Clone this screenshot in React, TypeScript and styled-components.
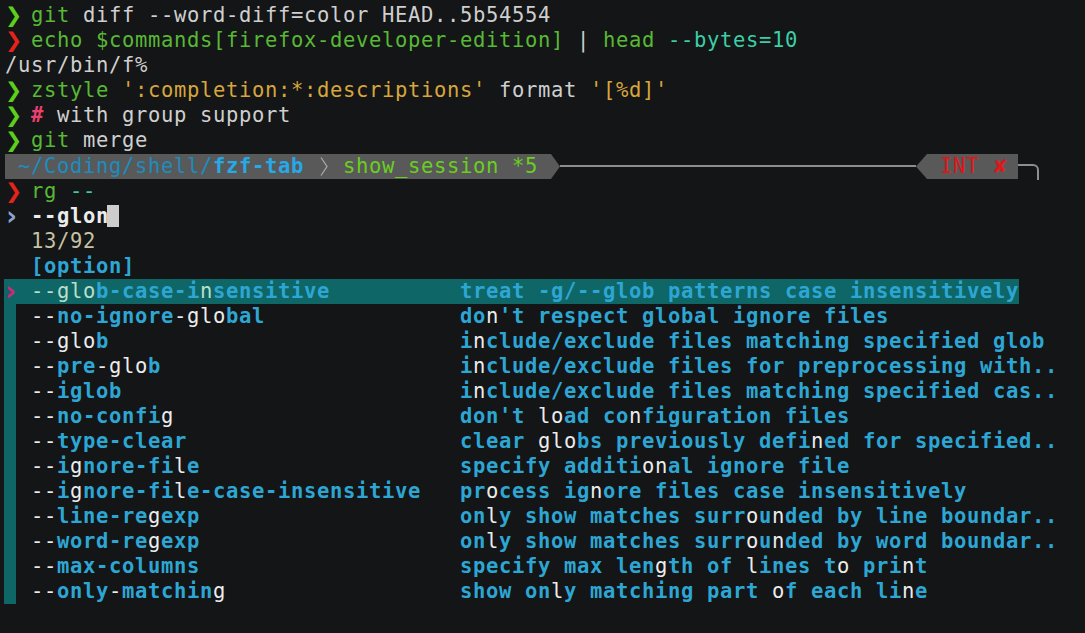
import styled, { createGlobalStyle } from "styled-components";

const palette = {
  fg: "#cfcfcf",
  green: "#58b934",
  okPrompt: "#5ccf1c",
  errPrompt: "#e3231c",
  teal: "#3ccfa6",
  yellow: "#d8a63c",
  pink: "#e9416f",
  blue: "#2ea6d4",
  white: "#ececec",
  khaki: "#c8c2a2",
  pointer: "#8ba6d4",
};

type Tone = keyof typeof palette;
type Seg = [string, Tone, boolean?];

const GlobalStyle = createGlobalStyle`
  body {
    margin: 0;
    background: #131517;
    overflow: hidden;
  }
`;

const Screen = styled.main`
  box-sizing: border-box;
  width: 1085px;
  height: 633px;
  padding: 3px 0 0 5px;
  font-family: "DejaVu Sans Mono", "Liberation Mono", monospace;
  font-size: 20.5px;
  letter-spacing: calc(13px - 1ch);
  color: ${palette.fg};
`;

const Line = styled.div`
  height: 25px;
  line-height: 25px;
  white-space: pre;
`;

const Txt = styled.span<{ $c: Tone; $b?: boolean }>`
  color: ${(p) => palette[p.$c]};
  font-weight: ${(p) => (p.$b ? 700 : 400)};
`;

const Glyph = styled.span<{ $c: string; $size?: number }>`
  display: inline-block;
  width: 13px;
  text-align: center;
  letter-spacing: 0;
  font-family: "DejaVu Sans", sans-serif;
  font-weight: 700;
  font-size: ${(p) => p.$size ?? 20.5}px;
  line-height: 25px;
  vertical-align: top;
  color: ${(p) => p.$c};
`;

const Cursor = styled.span`
  display: inline-block;
  width: 12px;
  height: 22px;
  margin-left: -2px;
  vertical-align: -4px;
  background: #cdcdcd;
`;

/* status line */
const StatusRow = styled.div`
  display: flex;
  align-items: center;
  height: 25px;
  padding-right: 46px;
  margin-top: 1px;
`;

const PathSegment = styled.div`
  height: 25px;
  line-height: 25px;
  padding-right: 9px;
  background: #595959;
  white-space: pre;
  clip-path: polygon(0 0, calc(100% - 9px) 0, 100% 50%, calc(100% - 9px) 100%, 0 100%);
`;

const Dir = styled.span<{ $b?: boolean }>`
  color: ${(p) => (p.$b ? "#26a9e8" : "#1d8cbf")};
  font-weight: ${(p) => (p.$b ? 700 : 400)};
`;

const Branch = styled.span`
  color: #6acf1f;
`;

const Fill = styled.div`
  flex: 1;
  height: 2px;
  margin-top: -2px;
  background: #8e8e8e;
`;

const StatusSegment = styled.div`
  height: 25px;
  line-height: 25px;
  padding-left: 11px;
  background: #595959;
  white-space: pre;
  color: #e0161a;
  clip-path: polygon(11px 0, 100% 0, 100% 100%, 11px 100%, 0 50%);
`;

const Corner = styled.div`
  align-self: flex-start;
  width: 19px;
  height: 14px;
  margin-top: 10px;
  border-top: 2px solid #8e8e8e;
  border-right: 2px solid #8e8e8e;
  border-top-right-radius: 6px;
`;

/* completion list */
const Item = styled.div<{ $selected?: boolean }>`
  display: flex;
  width: fit-content;
  height: 25px;
  line-height: 25px;
  margin-left: -1px;
  white-space: pre;
  background: ${(p) => (p.$selected ? "#0e6666" : "transparent")};
`;

const Gutter = styled.div`
  flex: none;
  width: 27px;
  display: flex;
`;

const Stripe = styled.div`
  width: 12px;
  height: 100%;
  background: #0e6666;
`;

const OptionCell = styled.div`
  flex: none;
  width: 429px;
`;

const Part = styled.span<{ $hl: boolean; $selected?: boolean }>`
  color: ${(p) => (p.$hl ? (p.$selected ? "#b9dfc9" : palette.white) : palette.blue)};
  font-weight: ${(p) => (p.$hl ? 400 : 700)};
`;

const history: { mark: string; segs: Seg[] }[] = [
  { mark: palette.okPrompt, segs: [["git", "green"], [" diff --word-diff=color HEAD..5b54554", "fg"]] },
  {
    mark: palette.errPrompt,
    segs: [
      ["echo", "green"],
      [" $commands[firefox-developer-edition]", "green"],
      [" | ", "fg"],
      ["head", "green"],
      [" --bytes=10", "teal"],
    ],
  },
  { mark: "", segs: [["/usr/bin/f%", "fg"]] },
  {
    mark: palette.okPrompt,
    segs: [
      ["zstyle", "green"],
      [" ':completion:*:descriptions'", "yellow"],
      [" format ", "fg"],
      ["'[%d]'", "yellow"],
    ],
  },
  { mark: palette.okPrompt, segs: [["#", "pink", true], [" with group support", "fg"]] },
  { mark: palette.okPrompt, segs: [["git", "green"], [" merge", "fg"]] },
];

const options: [string, string][] = [
  ["{--glo}b-case-i{n}sensitive", "treat -g/--glob patterns case insensitively"],
  ["{--}no-ignore{-glo}bal", "do{n}'t respect global ignore files"],
  ["{--glo}b", "i{n}clude/exclude files matching specified glob"],
  ["{--}pre{-glo}b", "i{n}clude/exclude files for preprocessing with.."],
  ["{--}iglob", "i{n}clude/exclude files matching specified cas.."],
  ["{--}no-confi{g}", "don't {lo}ad co{n}figuration files"],
  ["{--}type-clear", "clear {glo}bs previously defi{n}ed for specified.."],
  ["{--}i{g}nore-fi{l}e", "specify additi{on}al ignore file"],
  ["{--}i{g}nore-fi{l}e-case-insensitive", "pr{o}cess ig{n}ore files case insensitively"],
  ["{--}line-re{g}exp", "on{l}y show matches surr{o}u{n}ded by line boundar.."],
  ["{--}word-re{g}exp", "on{l}y show matches surr{o}u{n}ded by word boundar.."],
  ["{--}max-columns", "specify max len{g}th of {l}ines t{o} pri{n}t"],
  ["{--}only{-}matchin{g}", "show on{l}y matching part {o}f each li{n}e"],
];

const parse = (s: string) =>
  s
    .split(/(\{[^}]*\})/)
    .filter(Boolean)
    .map((p) => (p.startsWith("{") ? { t: p.slice(1, -1), hl: true } : { t: p, hl: false }));

const Marked = ({ text, selected }: { text: string; selected?: boolean }) => (
  <>
    {parse(text).map((p, i) => (
      <Part key={i} $hl={p.hl} $selected={selected}>
        {p.t}
      </Part>
    ))}
  </>
);

const Chevron = () => (
  <svg width="13" height="25" viewBox="0 0 13 25" style={{ verticalAlign: "top" }}>
    <path d="M4 3.5 L10 12.5 L4 21.5" fill="none" stroke="#a8a8a8" strokeWidth="1.3" />
  </svg>
);

export default function App() {
  return (
    <Screen>
      <GlobalStyle />
      {history.map((row, i) => (
        <Line key={i}>
          {row.mark && (
            <>
              <Glyph $c={row.mark}>❯</Glyph>{" "}
            </>
          )}
          {row.segs.map(([t, c, b], j) => (
            <Txt key={j} $c={c} $b={b}>
              {t}
            </Txt>
          ))}
        </Line>
      ))}

      <StatusRow>
        <PathSegment>
          <Dir>{" ~/Coding/shell/"}</Dir>
          <Dir $b>fzf-tab</Dir>
          {" "}
          <Chevron />
          {" "}
          <Branch>{"show_session *5 "}</Branch>
        </PathSegment>
        <Fill />
        <StatusSegment>
          {" INT "}
          <Glyph $c="#e0161a" $size={19}>✘</Glyph>
          {" "}
        </StatusSegment>
        <Corner />
      </StatusRow>

      <Line>
        <Glyph $c={palette.errPrompt}>❯</Glyph> <Txt $c="green">rg</Txt> <Txt $c="teal">--</Txt>
      </Line>
      <Line>
        <Glyph $c={palette.pointer} $size={26}>›</Glyph> <Txt $c="white" $b>--glon</Txt>
        <Cursor />
      </Line>
      <Line>
        {"  "}
        <Txt $c="khaki">13/92</Txt>
      </Line>
      <Line>
        {"  "}
        <Txt $c="blue" $b>[option]</Txt>
      </Line>

      {options.map(([opt, desc], i) => {
        const selected = i === 0;
        return (
          <Item key={opt} $selected={selected}>
            <Gutter>{selected ? <Glyph $c="#d6237a" $size={26}>›</Glyph> : <Stripe />}</Gutter>
            <OptionCell>
              <Marked text={opt} selected={selected} />
            </OptionCell>
            <div>
              {selected ? (
                <Part $hl={false}>{desc}</Part>
              ) : (
                <Marked text={desc} />
              )}
            </div>
          </Item>
        );
      })}
    </Screen>
  );
}
